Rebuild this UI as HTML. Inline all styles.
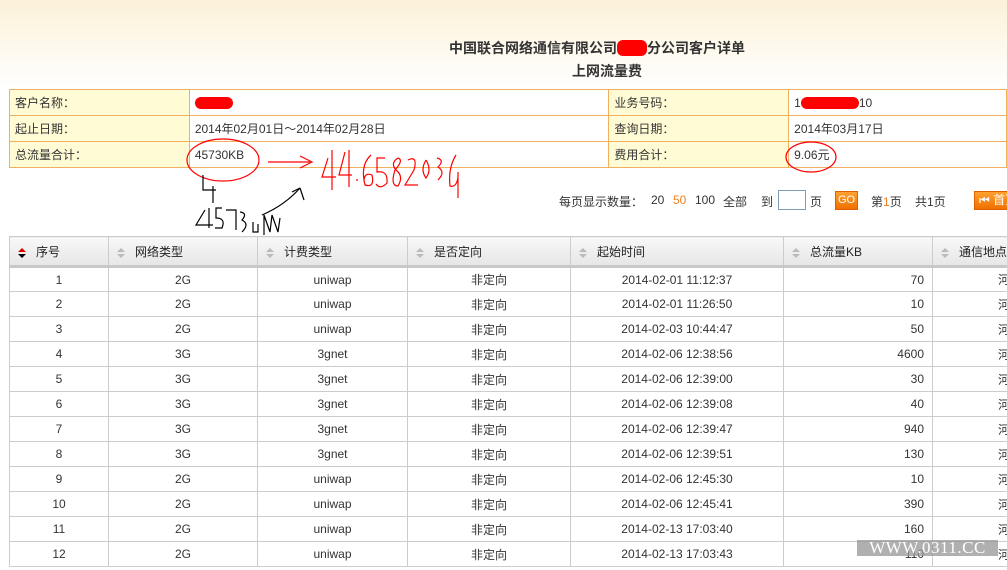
<!DOCTYPE html>
<html><head><meta charset="utf-8"><style>
*{margin:0;padding:0;box-sizing:border-box}
body{width:1007px;height:570px;overflow:hidden;position:relative;font-family:"Liberation Sans","Noto Sans CJK SC",sans-serif;font-size:12px;color:#333;background:linear-gradient(#fcf1d8 0px,#fefbf3 60px,#fff 88px,#fff)}
.a{position:absolute;white-space:nowrap}
.t{font-weight:bold;font-size:14px;color:#333}
.info{position:absolute;left:9px;top:89px;border-collapse:collapse}
.info td{border:1px solid #f0b060;height:26px;padding-left:5px;font-size:12px}
.info .l{background:#fffbd4}
.grid{position:absolute;left:9px;top:236px;border-collapse:collapse;table-layout:fixed;width:1003px}
.grid th{height:30px;background:linear-gradient(#f8f8f8,#e6e6e6);border:1px solid #ccc;border-bottom:3px solid #c8c8c8;font-weight:normal;text-align:left;padding-left:26px;position:relative;font-size:12px;color:#222}
.grid th i{position:absolute;left:8px;top:11px;width:0;height:0;border-left:4px solid transparent;border-right:4px solid transparent;border-bottom:4px solid #bbb}
.grid th b{position:absolute;left:8px;top:17px;width:0;height:0;border-left:4px solid transparent;border-right:4px solid transparent;border-top:4px solid #bbb}
.grid td{height:25px;border:1px solid #ccc;text-align:center;font-size:12px;color:#333;background:#fff;white-space:nowrap;overflow:hidden}
.grid td.r{text-align:right;padding-right:8px}
.grid td.e{text-align:left;padding-left:65px}
</style></head><body>
<div class="a t" style="left:449px;top:38px">中国联合网络通信有限公司<span style="display:inline-block;width:30px;height:16px;background:#f00;border-radius:6px;vertical-align:-3px"></span>分公司客户详单</div>
<div class="a t" style="left:572px;top:61px">上网流量费</div>
<table class="info">
<tr><td class="l" style="width:180px">客户名称：</td><td style="width:420px"><span style="display:inline-block;width:38px;height:12px;background:#f00;border-radius:6px;vertical-align:-2px"></span></td><td class="l" style="width:180px">业务号码：</td><td style="width:218px">1<span style="display:inline-block;width:58px;height:12px;background:#f00;border-radius:6px;vertical-align:-2px"></span>10</td></tr>
<tr><td class="l">起止日期：</td><td>2014年02月01日～2014年02月28日</td><td class="l">查询日期：</td><td>2014年03月17日</td></tr>
<tr><td class="l">总流量合计：</td><td>45730KB</td><td class="l">费用合计：</td><td>9.06元</td></tr>
</table>
<svg class="a" style="left:0;top:0" width="1007" height="240">
<g fill="none" stroke="#f00" stroke-width="1.2">
<ellipse cx="223" cy="160" rx="36" ry="21"/>
<ellipse cx="811" cy="157" rx="25" ry="15"/>
<path d="M268 162 H310 M300 156 L312 162 L300 168"/>
<path d="M328 158 L322 177 H336 M332 150 V190 M345 152 L339 175 H352 M349 150 V187 M356 180 h2 M371 155 Q360 165 365 185 Q375 188 372 175 Q365 172 364 180 M385 158 H377 V172 Q388 170 387 183 Q380 190 376 184 M398 158 Q390 163 396 170 Q404 176 398 186 Q390 186 395 170 Q404 160 398 158 M408 160 Q418 155 414 170 L405 185 H418 M426 160 Q420 170 426 178 Q432 170 426 160 M437 158 Q445 160 438 167 Q446 172 438 180 M456 155 Q448 168 450 186 Q456 188 458 178 M458 172 V198"/>
</g>
<g fill="none" stroke="#000" stroke-width="1.2">
<path d="M203 175 V190 H216 M213 186 V203 M300 188 Q285 205 262 215 M300 188 L304 200 M300 188 L292 192"/>
<path d="M205 210 L196 225 H213 M209 208 V228 M222 208 H216 V218 Q226 218 222 228 H215 M226 210 H236 V230 M240 212 Q248 213 242 220 Q250 224 242 232 M253 222 V232 H258 V224 M264 215 V235 M264 215 L270 232 L272 215 L278 232 L280 218"/>
</g>
</svg>
<div class="a" style="left:559px;top:193px;color:#333">每页显示数量：</div>
<div class="a" style="left:651px;top:193px;color:#333">20</div>
<div class="a" style="left:673px;top:193px;color:#f08020">50</div>
<div class="a" style="left:695px;top:193px;color:#333">100</div>
<div class="a" style="left:723px;top:193px">全部</div>
<div class="a" style="left:761px;top:193px">到</div>
<div class="a" style="left:778px;top:190px;width:28px;height:20px;border:1px solid #7f9db9;background:#fff"></div>
<div class="a" style="left:810px;top:193px">页</div>
<div class="a" style="left:835px;top:191px;width:23px;height:19px;background:linear-gradient(#ffa030,#f07000);border:1px solid #e06000;color:#fff;font-size:11px;text-align:center;line-height:17px">GO</div>
<div class="a" style="left:871px;top:193px">第<span style="color:#f08020">1</span>页</div>
<div class="a" style="left:915px;top:193px">共1页</div>
<div class="a" style="left:974px;top:191px;width:40px;height:19px;background:linear-gradient(#ffa030,#f07000);border:1px solid #e06000;color:#fff;font-size:12px;line-height:17px;padding-left:4px">⏮ 首页</div>
<table class="grid">
<colgroup><col style="width:99px"><col style="width:149px"><col style="width:150px"><col style="width:163px"><col style="width:213px"><col style="width:149px"><col style="width:80px"></colgroup>
<tr><th><i style="border-bottom-color:#d00"></i><b style="border-top-color:#000"></b>序号</th><th><i></i><b></b>网络类型</th><th><i></i><b></b>计费类型</th><th><i></i><b></b>是否定向</th><th><i></i><b></b>起始时间</th><th><i></i><b></b>总流量KB</th><th><i></i><b></b>通信地点</th></tr>
<tr><td>1</td><td>2G</td><td>uniwap</td><td>非定向</td><td>2014-02-01 11:12:37</td><td class="r">70</td><td class="e">河</td></tr>
<tr><td>2</td><td>2G</td><td>uniwap</td><td>非定向</td><td>2014-02-01 11:26:50</td><td class="r">10</td><td class="e">河</td></tr>
<tr><td>3</td><td>2G</td><td>uniwap</td><td>非定向</td><td>2014-02-03 10:44:47</td><td class="r">50</td><td class="e">河</td></tr>
<tr><td>4</td><td>3G</td><td>3gnet</td><td>非定向</td><td>2014-02-06 12:38:56</td><td class="r">4600</td><td class="e">河</td></tr>
<tr><td>5</td><td>3G</td><td>3gnet</td><td>非定向</td><td>2014-02-06 12:39:00</td><td class="r">30</td><td class="e">河</td></tr>
<tr><td>6</td><td>3G</td><td>3gnet</td><td>非定向</td><td>2014-02-06 12:39:08</td><td class="r">40</td><td class="e">河</td></tr>
<tr><td>7</td><td>3G</td><td>3gnet</td><td>非定向</td><td>2014-02-06 12:39:47</td><td class="r">940</td><td class="e">河</td></tr>
<tr><td>8</td><td>3G</td><td>3gnet</td><td>非定向</td><td>2014-02-06 12:39:51</td><td class="r">130</td><td class="e">河</td></tr>
<tr><td>9</td><td>2G</td><td>uniwap</td><td>非定向</td><td>2014-02-06 12:45:30</td><td class="r">10</td><td class="e">河</td></tr>
<tr><td>10</td><td>2G</td><td>uniwap</td><td>非定向</td><td>2014-02-06 12:45:41</td><td class="r">390</td><td class="e">河</td></tr>
<tr><td>11</td><td>2G</td><td>uniwap</td><td>非定向</td><td>2014-02-13 17:03:40</td><td class="r">160</td><td class="e">河</td></tr>
<tr><td>12</td><td>2G</td><td>uniwap</td><td>非定向</td><td>2014-02-13 17:03:43</td><td class="r">110</td><td class="e">河</td></tr>
</table>
<div class="a" style="left:857px;top:540px;width:141px;height:16px;background:rgba(150,150,150,.75);color:#fff;font-family:'Liberation Serif',serif;font-size:17px;line-height:16px;text-align:center;letter-spacing:0.5px">WWW.0311.CC</div>
</body></html>
